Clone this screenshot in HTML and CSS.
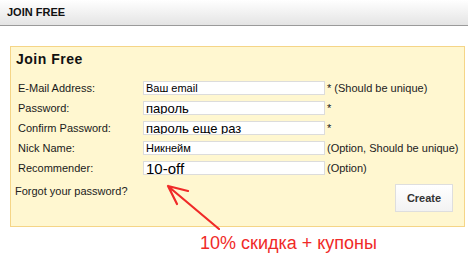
FILE: index.html
```html
<!DOCTYPE html>
<html lang="en">
<head>
  <meta charset="UTF-8">
  <title>Join Free</title>
  <link rel="stylesheet" href="styles.css">
</head>
<body>
  <div class="topbar">JOIN FREE</div>
  <div class="join-box">
    <h2>Join Free</h2>
    <div class="form-grid">
      <label>E-Mail Address:</label>
      <input type="text" class="small" value="Ваш email">
      <span class="note">* (Should be unique)</span>

      <label>Password:</label>
      <input type="text" class="mid" value="пароль">
      <span class="note">*</span>

      <label>Confirm Password:</label>
      <input type="text" class="mid" value="пароль еще раз">
      <span class="note">*</span>

      <label>Nick Name:</label>
      <input type="text" class="small" value="Никнейм">
      <span class="note">(Option, Should be unique)</span>

      <label>Recommender:</label>
      <input type="text" class="big" value="10-off">
      <span class="note">(Option)</span>
    </div>
    <div class="bottom-row">
      <a class="forgot">Forgot your password?</a>
      <button>Create</button>
    </div>
    <svg class="arrow" width="60" height="50" viewBox="0 0 60 50">
      <path d="M59 49 L9 7 M8 6 L28 11 M8 6 L17 24" stroke="#f02a28" stroke-width="2.2" fill="none" stroke-linecap="round"/>
    </svg>
  </div>
  <div class="promo">10% скидка + купоны</div>
</body>
</html>
```

FILE: styles.css
```css
* {
  box-sizing: border-box;
}
body {
  margin: 0;
  background: #fff;
  font-family: Tahoma, "Liberation Sans", Arial, sans-serif;
  font-size: 11px;
  color: #222;
}
.topbar {
  height: 26px;
  padding: 6px 7px 0;
  background: linear-gradient(#ffffff, #e4e4e4);
  border-bottom: 1px solid #9a9a9a;
  font-weight: bold;
  font-size: 11px;
  color: #111;
}
.join-box {
  position: relative;
  margin: 20px 3px 0 10px;
  height: 181px;
  background: #fff7d0;
  border: 1px solid #f5d587;
  padding: 3px 5px 0;
}
.join-box h2 {
  margin: 0 0 10px;
  font-size: 14px;
  line-height: 18px;
  letter-spacing: 0.5px;
  color: #111;
}
.form-grid {
  display: grid;
  grid-template-columns: 125px 182px auto;
  grid-auto-rows: 20px;
  align-items: center;
  padding-left: 2px;
}
.form-grid label {
  color: #1a1a1a;
}
.form-grid input {
  height: 14px;
  width: 182px;
  border: 1px solid #dcdcdc;
  background: #fff;
  padding: 0 2px;
  font-family: "Liberation Sans", Arial, sans-serif;
  color: #000;
}
.form-grid input.small {
  font-size: 11px;
}
.form-grid input.mid {
  font-size: 13px;
}
.form-grid input.big {
  font-size: 15px;
}
.note {
  padding-left: 2px;
  color: #222;
}
.bottom-row {
  display: flex;
  justify-content: space-between;
  align-items: flex-start;
  margin-top: 2px;
  padding-right: 6px;
}
.forgot {
  margin-left: -1px;
  margin-top: 5px;
  color: #222;
}
.bottom-row button {
  width: 58px;
  height: 28px;
  margin-top: 4px;
  border: 1px solid #dedede;
  background: linear-gradient(#ffffff, #f2f2f2);
  font-family: Tahoma, "Liberation Sans", Arial, sans-serif;
  font-size: 11px;
  font-weight: bold;
  color: #333;
}
.arrow {
  position: absolute;
  left: 149px;
  top: 133px;
}
.promo {
  margin: 6px 0 0 200px;
  font-family: "Liberation Sans", Arial, sans-serif;
  font-size: 18px;
  color: #f02a28;
}
```
